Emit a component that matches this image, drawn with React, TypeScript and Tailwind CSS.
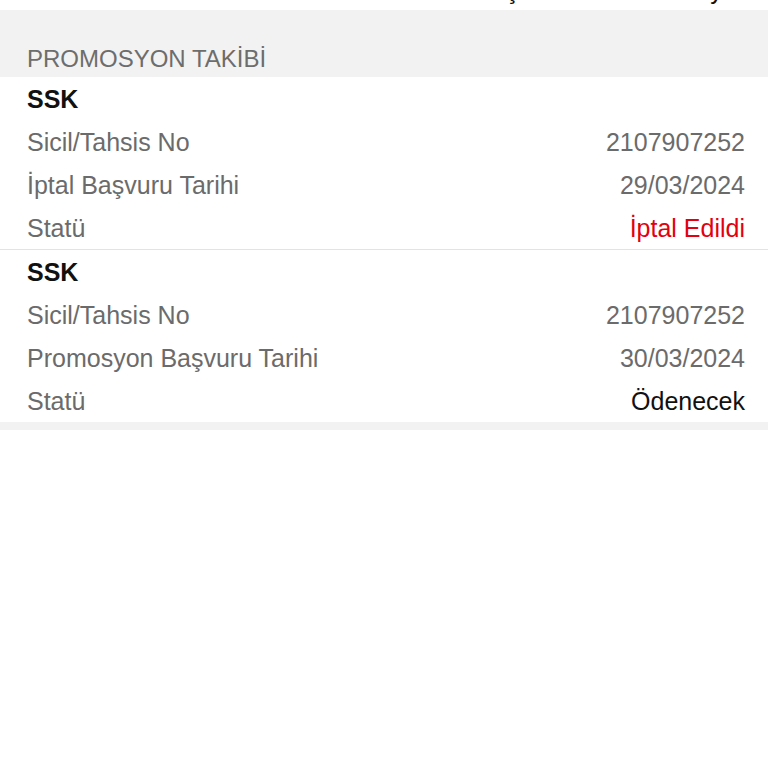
import React from "react";

const font = { fontFamily: '"Liberation Sans", Arial, sans-serif' };

function Row({ label, value, valueClass }: { label: string; value?: string; valueClass?: string }) {
  return (
    <div className="flex h-[43px] items-center justify-between pl-[27px] pr-[23px]">
      <span className="text-[25px] leading-[28px] text-[#6b6b6b]">{label}</span>
      {value !== undefined && (
        <span className={"text-[25px] leading-[28px] " + (valueClass ?? "text-[#6b6b6b]")}>{value}</span>
      )}
    </div>
  );
}

function Card({ dateLabel, date, status, statusClass }: { dateLabel: string; date: string; status: string; statusClass: string }) {
  return (
    <div className="bg-white">
      <div className="flex h-[43px] items-center pl-[27px]">
        <span className="text-[25px] leading-[28px] font-bold text-[#111111]">SSK</span>
      </div>
      <Row label="Sicil/Tahsis No" value="2107907252" />
      <Row label={dateLabel} value={date} />
      <Row label="Statü" value={status} valueClass={statusClass} />
    </div>
  );
}

export default function App() {
  return (
    <div className="min-h-[768px] w-full bg-white" style={font}>
      <div className="flex h-[10px] items-end justify-between overflow-hidden bg-white pb-[8px] pl-[27px] pr-[23px]">
        <span className="shrink-0 text-[25px] leading-[24px] text-[#6b6b6b]">Durum</span>
        <span className="shrink-0 text-[25px] leading-[24px] text-[#111111]">Maaş Hesabı Bulunmuyor</span>
      </div>
      <div className="flex h-[67px] items-end bg-[#f2f2f2] pb-[4px] pl-[27px]">
        <span className="text-[24px] leading-[28px] text-[#6d6d6d]">PROMOSYON TAKİBİ</span>
      </div>
      <Card dateLabel="İptal Başvuru Tarihi" date="29/03/2024" status="İptal Edildi" statusClass="text-[#e3000f]" />
      <div className="h-px bg-[#e3e3e3]" />
      <Card dateLabel="Promosyon Başvuru Tarihi" date="30/03/2024" status="Ödenecek" statusClass="text-[#111111]" />
      <div className="h-[8px] bg-[#f2f2f2]" />
    </div>
  );
}
